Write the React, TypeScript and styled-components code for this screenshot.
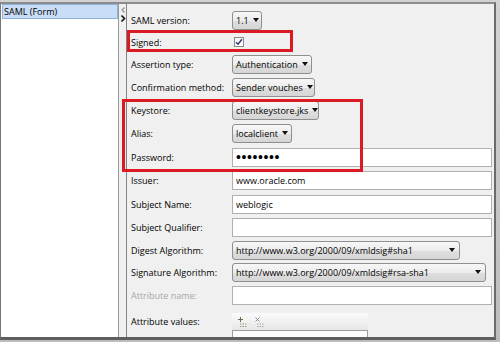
import React from 'react';
import styled, { createGlobalStyle } from 'styled-components';

const GlobalStyle = createGlobalStyle`
  html, body {
    margin: 0;
    padding: 0;
    background: #ffffff;
  }
  body {
    font-family: 'Open Sans', 'Liberation Sans', sans-serif;
    font-size: 9px;
    color: #000000;
  }
`;

const Window = styled.div`
  position: relative;
  width: 500px;
  height: 342px;
  box-sizing: border-box;
  padding: 2px 4px 2px 0;
  background: linear-gradient(#d2d2d2, #bdbdbd);
  overflow: hidden;
`;

const Body = styled.div`
  height: 100%;
  box-sizing: border-box;
  display: flex;
  background: #f0f0f0;
  border-top: 2px solid #8c8c8c;
  border-right: 2px solid #6a6a6a;
  border-bottom: 3px solid #5e5e5e;
  border-left: 1px solid #777777;
`;

const TreePanel = styled.div`
  width: 118px;
  flex-shrink: 0;
  box-sizing: border-box;
  background: #ffffff;
  border-right: 1px solid #9a9a9a;
  padding-left: 1px;
`;

const TreeItem = styled.div<{ $selected?: boolean }>`
  height: 15px;
  box-sizing: border-box;
  line-height: 13px;
  padding-left: 1px;
  background: ${p => (p.$selected ? '#c9def6' : 'transparent')};
  border: 1px solid ${p => (p.$selected ? '#8fb2dc' : 'transparent')};
  color: #000000;
`;

const Splitter = styled.div`
  width: 7px;
  flex-shrink: 0;
  display: flex;
  justify-content: center;
  padding-top: 1px;
  background: #f0f0f0;
`;

const FormPanel = styled.div`
  flex: 1;
  min-width: 0;
  display: flex;
  flex-direction: column;
  box-sizing: border-box;
  padding: 5px 2px 0 4px;
  border-left: 1px solid #828282;
  overflow: hidden;
`;

const Row = styled.div<{ $h: number; $top?: boolean }>`
  display: flex;
  align-items: ${p => (p.$top ? 'flex-start' : 'center')};
  height: ${p => p.$h}px;
  flex-shrink: 0;
`;

const Label = styled.div<{ $disabled?: boolean; $pad?: number }>`
  width: 101px;
  flex-shrink: 0;
  line-height: 13px;
  padding-top: ${p => p.$pad || 0}px;
  white-space: nowrap;
  color: ${p => (p.$disabled ? '#a6a6a6' : '#000000')};
`;

const Select = styled.div<{ $w: number }>`
  width: ${p => p.$w}px;
  height: 19px;
  box-sizing: border-box;
  display: flex;
  align-items: center;
  justify-content: space-between;
  padding: 0 4px 0 3px;
  border: 1px solid #8e8f8f;
  border-radius: 3px;
  background: linear-gradient(#f7f7f7, #ececec 50%, #dfdfdf 51%, #d5d5d5);
  white-space: nowrap;
  overflow: hidden;
`;

const Arrow = styled.span`
  width: 0;
  height: 0;
  flex-shrink: 0;
  margin-left: 4px;
  border-left: 3.5px solid transparent;
  border-right: 3.5px solid transparent;
  border-top: 4px solid #111111;
`;

const TextInput = styled.div`
  flex: 1;
  height: 19px;
  box-sizing: border-box;
  display: flex;
  align-items: center;
  padding: 0 3px;
  background: #ffffff;
  border: 1px solid #b0b0b0;
  white-space: nowrap;
`;

const Dots = styled.span`
  font-family: 'Liberation Sans', sans-serif;
  font-size: 14px;
  letter-spacing: 0.6px;
  line-height: 14px;
  color: #000000;
`;

const Checkbox = styled.div`
  width: 10px;
  height: 10px;
  margin-left: 2px;
  box-sizing: border-box;
  border: 1px solid #8a8a8a;
  background: linear-gradient(#f4f4f4, #ffffff);
  display: flex;
  align-items: center;
  justify-content: center;
`;

const ValuesBox = styled.div`
  width: 136px;
  display: flex;
  flex-direction: column;
  margin-top: 6px;
`;

const ValuesToolbar = styled.div`
  height: 17px;
  display: flex;
  align-items: center;
  gap: 6px;
  padding-left: 5px;
  background: linear-gradient(#fbfbfb, #e6e6e6);
`;

const ValuesList = styled.div`
  height: 20px;
  box-sizing: border-box;
  background: #ffffff;
  border: 1px solid #9c9c9c;
`;

const Highlight = styled.div<{ $x: number; $y: number; $w: number; $h: number }>`
  position: absolute;
  left: ${p => p.$x}px;
  top: ${p => p.$y}px;
  width: ${p => p.$w}px;
  height: ${p => p.$h}px;
  box-sizing: border-box;
  border: 3px solid #dc1a24;
  pointer-events: none;
`;

const AddIcon = () => (
  <svg width="11" height="12" viewBox="0 0 11 12">
    <path d="M1 3.5h5M3.5 1v5" stroke="#6b6b4a" strokeWidth="1" />
    <path d="M3 8h7M3 10.5h7" stroke="#9a9a8a" strokeWidth="1" strokeDasharray="1.5 1" />
  </svg>
);

const RemoveIcon = () => (
  <svg width="11" height="12" viewBox="0 0 11 12">
    <path d="M1.5 1.5l4 4M5.5 1.5l-4 4" stroke="#8a8a8a" strokeWidth="1" />
    <path d="M3 8h7M3 10.5h7" stroke="#a8a8a8" strokeWidth="1" strokeDasharray="1.5 1" />
  </svg>
);

const SplitterArrows = () => (
  <svg width="6" height="18" viewBox="0 0 6 18">
    <path d="M4.5 2.5L2 5l2.5 2.5" stroke="#8c8c8c" strokeWidth="1.2" fill="none" />
    <path d="M1.5 10.5L4.5 13.5L1.5 16.5" stroke="#111111" strokeWidth="1.6" fill="none" />
  </svg>
);

const CheckMark = () => (
  <svg width="8" height="8" viewBox="0 0 8 8">
    <path d="M1 4.2l2 2L7 1.2" stroke="#273a6c" strokeWidth="1.4" fill="none" />
  </svg>
);

const App = () => (
  <>
    <GlobalStyle />
    <Window>
      <Body>
        <TreePanel>
          <TreeItem $selected>SAML (Form)</TreeItem>
        </TreePanel>
        <Splitter>
          <SplitterArrows />
        </Splitter>
        <FormPanel>
          <Row $h={22}>
            <Label>SAML version:</Label>
            <Select $w={30}>
              1.1
              <Arrow />
            </Select>
          </Row>
          <Row $h={22}>
            <Label>Signed:</Label>
            <Checkbox>
              <CheckMark />
            </Checkbox>
          </Row>
          <Row $h={22}>
            <Label>Assertion type:</Label>
            <Select $w={80}>
              Authentication
              <Arrow />
            </Select>
          </Row>
          <Row $h={24}>
            <Label>Confirmation method:</Label>
            <Select $w={83}>
              Sender vouches
              <Arrow />
            </Select>
          </Row>
          <Row $h={22}>
            <Label>Keystore:</Label>
            <Select $w={87}>
              clientkeystore.jks
              <Arrow />
            </Select>
          </Row>
          <Row $h={24}>
            <Label>Alias:</Label>
            <Select $w={60}>
              localclient
              <Arrow />
            </Select>
          </Row>
          <Row $h={24}>
            <Label>Password:</Label>
            <TextInput>
              <Dots>••••••••</Dots>
            </TextInput>
          </Row>
          <Row $h={23}>
            <Label>Issuer:</Label>
            <TextInput>www.oracle.com</TextInput>
          </Row>
          <Row $h={24}>
            <Label>Subject Name:</Label>
            <TextInput>weblogic</TextInput>
          </Row>
          <Row $h={23}>
            <Label>Subject Qualifier:</Label>
            <TextInput />
          </Row>
          <Row $h={22}>
            <Label>Digest Algorithm:</Label>
            <Select $w={228}>
              http://www.w3.org/2000/09/xmldsig#sha1
              <Arrow />
            </Select>
          </Row>
          <Row $h={22}>
            <Label>Signature Algorithm:</Label>
            <Select $w={254}>
              http://www.w3.org/2000/09/xmldsig#rsa-sha1
              <Arrow />
            </Select>
          </Row>
          <Row $h={24}>
            <Label $disabled>Attribute name:</Label>
            <TextInput />
          </Row>
          <Row $h={44} $top>
            <Label $pad={8}>Attribute values:</Label>
            <ValuesBox>
              <ValuesToolbar>
                <AddIcon />
                <RemoveIcon />
              </ValuesToolbar>
              <ValuesList />
            </ValuesBox>
          </Row>
        </FormPanel>
      </Body>
      <Highlight $x={127} $y={30} $w={166} $h={22} />
      <Highlight $x={122} $y={99} $w={241} $h={73} />
    </Window>
  </>
);

export default App;
